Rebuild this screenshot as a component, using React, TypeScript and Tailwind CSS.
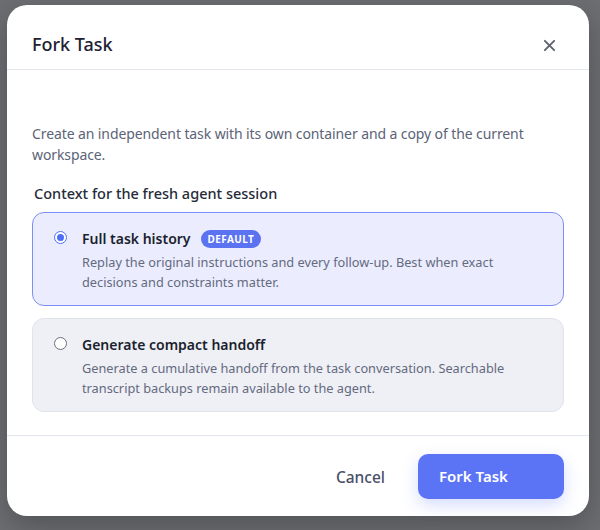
import React from "react";

export default function App() {
  return (
    <div
      className="w-[600px] h-[530px] bg-[#6c6e72] flex flex-col items-start pt-[5px] pl-[7px] overflow-hidden"
      style={{ fontFamily: '"Noto Sans", "Open Sans", sans-serif' }}
    >
      <div className="w-[582px] h-[511px] bg-white rounded-[20px] flex flex-col shadow-[0_10px_30px_rgba(0,0,0,0.25)]">
        <div className="h-[65px] flex items-center justify-between pl-[25px] pr-[33px] border-b border-[#e3e6ef] pt-[14px]">
          <div className="text-[18px] font-medium text-[#1c2133] leading-none">Fork Task</div>
          <svg width="13" height="13" viewBox="0 0 14 14" className="mt-[2px]">
            <path d="M2 2 L12 12 M12 2 L2 12" stroke="#5d6270" strokeWidth="2" strokeLinecap="round" />
          </svg>
        </div>
        <div className="flex flex-col px-[25px] pt-[54px]">
          <p className="text-[14px] leading-[21px] text-[#5c6377] -mt-[1px] tracking-[-0.1px]">
            Create an independent task with its own container and a copy of the current workspace.
          </p>
          <div className="mt-[18px] pl-[2px] text-[14.5px] font-medium text-[#262b3a] leading-[20px]">
            Context for the fresh agent session
          </div>
          <div className="mt-[9px] flex flex-col gap-[12px]">
            <div className="h-[94px] rounded-[12px] border border-[#7d8ff4] bg-[#ebedfe] flex pl-[21px] pr-[16px] pt-[15px]">
              <div className="shrink-0 w-[13px] h-[13px] rounded-full border-[1.5px] border-[#4f6ef7] flex items-center justify-center mt-[3px] bg-white">
                <div className="w-[7px] h-[7px] rounded-full bg-[#4f6ef7]" />
              </div>
              <div className="ml-[15px] flex flex-col">
                <div className="flex items-center gap-[10px] h-[21px]">
                  <span className="text-[14px] font-semibold text-[#1b1f2e]">Full task history</span>
                  <span className="h-[18px] px-[7px] rounded-full bg-[#5b73f0] text-white text-[10px] font-bold tracking-[0.04em] flex items-center leading-none">
                    DEFAULT
                  </span>
                </div>
                <p className="mt-[3px] text-[12.75px] leading-[20px] text-[#646a80]">
                  Replay the original instructions and every follow-up. Best when exact decisions and constraints matter.
                </p>
              </div>
            </div>
            <div className="h-[94px] rounded-[12px] border border-[#e1e3ec] bg-[#eff0f5] flex pl-[21px] pr-[16px] pt-[15px]">
              <div className="shrink-0 w-[13px] h-[13px] rounded-full border border-[#6a6f7c] mt-[3px] bg-white" />
              <div className="ml-[15px] flex flex-col">
                <div className="flex items-center h-[21px]">
                  <span className="text-[14px] font-semibold text-[#1b1f2e]">Generate compact handoff</span>
                </div>
                <p className="mt-[3px] text-[12.75px] leading-[20px] text-[#646a80]">
                  Generate a cumulative handoff from the task conversation. Searchable transcript backups remain available to the agent.
                </p>
              </div>
            </div>
          </div>
        </div>
        <div className="mt-auto border-t border-[#e3e6ef] h-[81px] flex items-center justify-end pr-[25px] gap-[33px]">
          <button className="text-[15.5px] font-medium text-[#4a5068] mt-[3px]">Cancel</button>
          <button className="w-[146px] h-[45px] rounded-[10px] bg-[#5b74f6] text-white text-[15px] font-semibold text-left pl-[21px] pt-[1px] shadow-[0_6px_16px_rgba(91,116,246,0.25)]">
            Fork Task
          </button>
        </div>
      </div>
    </div>
  );
}
